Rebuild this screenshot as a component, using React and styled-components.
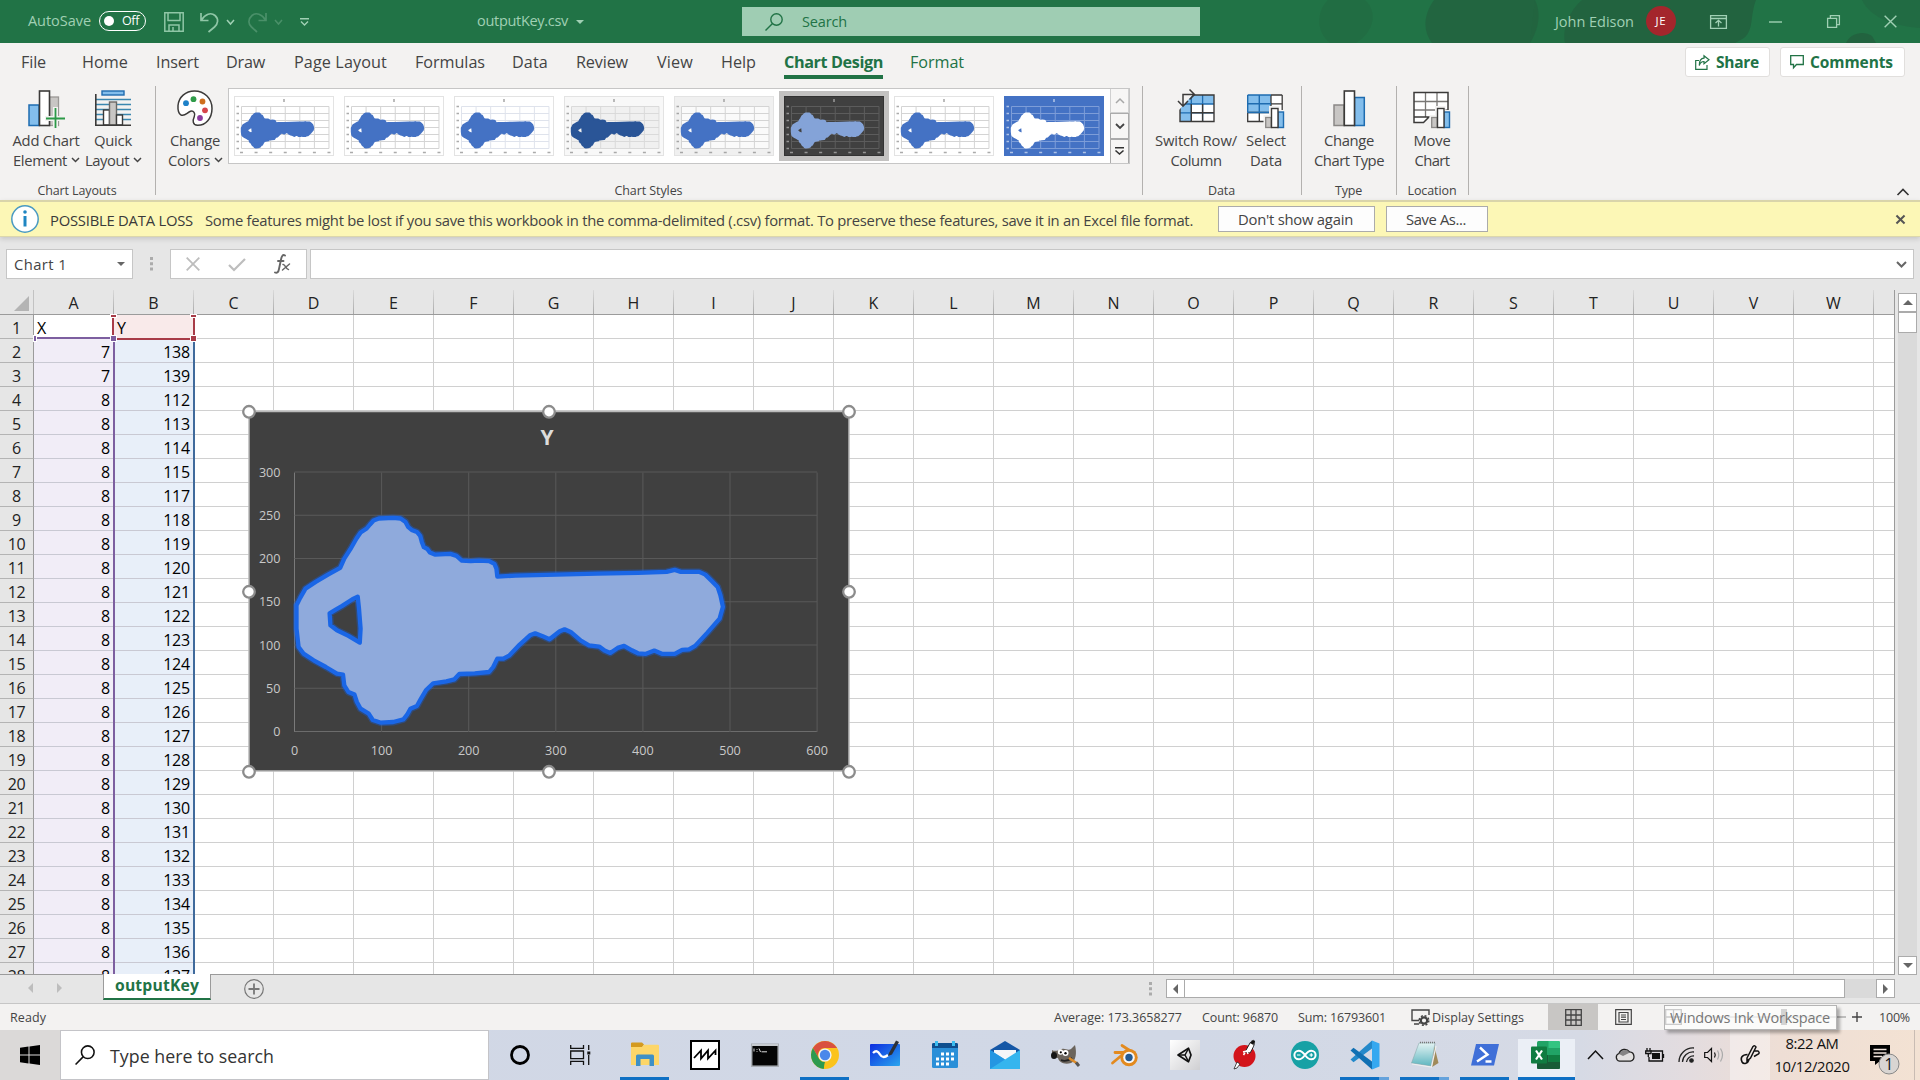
import React, { useLayoutEffect, useRef, useState } from "react";
import styled, { createGlobalStyle, css } from "styled-components";

const GlobalStyle = createGlobalStyle`
  * { box-sizing: border-box; }
  html, body { margin: 0; padding: 0; background: #e6e6e6; }
  body { font-family: "Open Sans", "Noto Sans", sans-serif; color: #444; overflow: hidden; }
  svg { display: block; flex: none; overflow: visible; }
`;

/* ---------- text ---------- */

const TextBox = styled.span`
  display: block;
  flex: none;
  white-space: nowrap;
  width: ${(p) => p.$w}px;
  margin-left: ${(p) => p.$ml || 0}px;
  margin-top: ${(p) => p.$mt || 0}px;
  font-size: ${(p) => p.$size}px;
  font-weight: ${(p) => p.$weight || 400};
  color: ${(p) => p.$color || "inherit"};
  line-height: ${(p) => p.$lh || 20}px;
`;

/* A label whose tracking is adjusted so that the word fills its column. */
function Label({ w, size, children, ...rest }) {
  const ref = useRef(null);
  const [tracking, setTracking] = useState(0);
  useLayoutEffect(() => {
    const range = document.createRange();
    range.selectNodeContents(ref.current);
    const natural = range.getBoundingClientRect().width;
    setTracking((w - natural) / String(children).length);
  }, []);
  return (
    <TextBox ref={ref} $w={w} $size={size} {...rest} style={{ letterSpacing: `${tracking}px` }}>
      {children}
    </TextBox>
  );
}

/* ---------- shell ---------- */

const Window = styled.div`
  width: 1920px;
  height: 1080px;
  display: flex;
  flex-direction: column;
  overflow: hidden;
  background: #e6e6e6;
`;

const Gap = styled.span`
  flex: none;
  width: ${(p) => p.$w}px;
`;

/* ---------- title bar ---------- */

const TitleBar = styled.header`
  position: relative;
  height: 43px;
  flex: none;
  display: flex;
  align-items: center;
  background: #217346;
  color: #a0d0b4;
  > * { position: relative; }
`;

const TitlePattern = styled.svg`
  && { position: absolute; right: 0; top: 0; }
  overflow: hidden;
`;

const Toggle = styled.div`
  width: 47px;
  height: 20px;
  margin: -2px 0 0 8px;
  border: 1.5px solid #fff;
  border-radius: 10px;
  display: flex;
  align-items: center;
  padding-left: 4px;
  color: #fff;
`;

const Knob = styled.i`
  width: 10px;
  height: 10px;
  border-radius: 50%;
  background: #fff;
`;

const SearchBox = styled.div`
  width: 458px;
  height: 29px;
  margin-left: 158px;
  background: #9fcdb3;
  color: #217346;
  display: flex;
  align-items: center;
  padding-left: 23px;
`;

const Avatar = styled.div`
  width: 30px;
  height: 30px;
  margin: -1px 0 0 12px;
  border-radius: 50%;
  background: #a4262c;
  color: #fff;
  display: flex;
  align-items: center;
  justify-content: center;
`;

/* ---------- tabs and ribbon ---------- */

const TabBar = styled.nav`
  height: 43px;
  flex: none;
  display: flex;
  align-items: flex-start;
  background: #f3f2f1;
`;

const Tab = styled.div`
  margin-left: ${(p) => p.$ml}px;
  height: 36px;
  padding-top: 9px;
  color: ${(p) => (p.$green ? "#217346" : "#444")};
  border-bottom: 4px solid ${(p) => (p.$active ? "#217346" : "transparent")};
`;

const ActionButton = styled.button`
  height: 30px;
  width: ${(p) => p.$w}px;
  margin: 4px 0 0 ${(p) => p.$ml}px;
  padding: 0 0 0 9px;
  border: 1px solid #e1dfdd;
  border-radius: 3px;
  background: #fff;
  color: #217346;
  font-family: inherit;
  display: flex;
  align-items: center;
  flex: none;
`;

const Ribbon = styled.section`
  height: 114px;
  flex: none;
  display: flex;
  background: #f3f2f1;
`;

const Group = styled.div`
  position: relative;
  width: ${(p) => p.$w}px;
  height: 114px;
  flex: none;
  display: flex;
  flex-direction: column;
  align-items: center;
  padding-right: 2px;
  &::after {
    content: "";
    position: absolute;
    right: 0;
    top: 0;
    width: 1px;
    height: 109px;
    background: #b3b1af;
  }
`;

const GroupBody = styled.div`
  height: 95px;
  flex: none;
  align-self: stretch;
  display: flex;
`;

const Command = styled.div`
  width: ${(p) => p.$w}px;
  margin-left: ${(p) => p.$ml}px;
  flex: none;
  display: flex;
  flex-direction: column;
  align-items: center;
  padding-top: 4px;
`;

const CommandIcon = styled.div`
  height: 40px;
  flex: none;
  display: flex;
  align-items: flex-start;
`;

const Line = styled.div`
  display: flex;
  align-items: center;
  gap: 5px;
  height: 20px;
`;

const Gallery = styled.div`
  width: 902px;
  height: 76px;
  flex: none;
  margin: 2px 0 0 3px;
  border: 1px solid #c6c6c6;
  background: #fff;
  display: flex;
  align-items: center;
  overflow: hidden;
`;

const Thumb = styled.div`
  width: 110px;
  height: 70px;
  flex: none;
  display: flex;
  align-items: center;
  justify-content: center;
  background: ${(p) => (p.$selected ? "#c3c2c1" : "transparent")};
`;

const GalleryScroll = styled.div`
  width: 19px;
  height: 76px;
  flex: none;
  margin-left: 1px;
  display: flex;
  flex-direction: column;
`;

const ScrollStep = styled.div`
  flex: 1;
  border: 1px solid ${(p) => (p.$off ? "#d0d0d0" : "#ababab")};
  background: #f7f6f5;
  display: flex;
  align-items: center;
  justify-content: center;
`;

/* ---------- message bar ---------- */

const MessageBar = styled.div`
  height: 37px;
  flex: none;
  display: flex;
  align-items: center;
  background: #fcf7b6;
  border-top: 2px solid #d9d4aa;
  border-bottom: 1px solid #dcd7ac;
  box-shadow: 0 2px 5px rgba(0, 0, 0, 0.14);
  z-index: 1;
  color: #444;
`;

const MessageButton = styled.button`
  width: ${(p) => p.$w}px;
  height: 26px;
  margin-left: ${(p) => p.$ml}px;
  padding: 0 2px 0 0;
  border: 1px solid #ababab;
  background: #fdfdfd;
  color: #444;
  font-family: inherit;
  display: flex;
  align-items: center;
  justify-content: center;
  flex: none;
`;

/* ---------- formula bar ---------- */

const FormulaBar = styled.div`
  height: 53px;
  flex: none;
  display: flex;
  align-items: flex-start;
  padding: 12px 0 0 6px;
`;

const Field = styled.div`
  height: 30px;
  width: ${(p) => p.$w}px;
  margin-left: ${(p) => p.$ml || 0}px;
  padding: 0 ${(p) => p.$pr || 0}px 0 ${(p) => p.$pl || 0}px;
  border: 1px solid #c6c6c6;
  background: #fff;
  display: flex;
  align-items: center;
  justify-content: space-between;
  flex: none;
`;

/* ---------- sheet ---------- */

const SheetArea = styled.main`
  height: 685px;
  flex: none;
  display: flex;
`;

const Grid = styled.div`
  position: relative;
  width: 1895px;
  height: 685px;
  flex: none;
  overflow: hidden;
  background: #fff;
  border-right: 1px solid #9b9b9b;
  border-bottom: 1px solid #9b9b9b;
`;

const HeaderRow = styled.div`
  display: flex;
  height: 25px;
  background: #e6e6e6;
  border-bottom: 1px solid #9b9b9b;
  color: #222;
`;

const Corner = styled.div`
  width: 34px;
  flex: none;
  display: flex;
  align-items: flex-end;
  justify-content: flex-end;
  padding: 0 4px 3px 0;
  border-right: 1px solid #c2c2c2;
`;

const ColumnHeader = styled.div`
  width: 80px;
  flex: none;
  text-align: center;
  font-size: 16px;
  line-height: 26px;
  border-right: 1px solid;
  border-image: linear-gradient(#dcdcdc, #a6a6a6) 1;
`;

const Row = styled.div`
  display: flex;
  height: 24px;
`;

const RowHeader = styled.div`
  width: 34px;
  flex: none;
  background: #e6e6e6;
  border-right: 1px solid #9b9b9b;
  border-bottom: 1px solid #b4b4b4;
  text-align: center;
  font-size: 16px;
  line-height: 26px;
  letter-spacing: -0.3px;
  color: #222;
`;

const tints = { a: "#f1edf7", b: "#e8eff9", head: "#f9eaea" };

const Cell = styled.div`
  width: ${(p) => p.$w || 80}px;
  flex: none;
  padding: 0 3px;
  border-right: 1px solid ${(p) => (p.$w ? "transparent" : "#d0d0d0")};
  border-bottom: 1px solid ${(p) => (p.$tint ? "#c9c9d3" : "#d0d0d0")};
  background: ${(p) => tints[p.$tint] || "#fff"};
  background-clip: padding-box;
  color: #000;
  font-size: 16px;
  line-height: 26px;
  letter-spacing: -0.2px;
  text-align: ${(p) => (p.$num ? "right" : "left")};
`;

const RangeFrame = styled.div`
  position: absolute;
  left: ${(p) => p.$x}px;
  top: ${(p) => p.$y}px;
  width: ${(p) => p.$w}px;
  height: ${(p) => p.$h}px;
  border: 0 solid ${(p) => p.$color};
  border-width: ${(p) => p.$edges};
`;

const RangeHandle = styled.i`
  position: absolute;
  left: ${(p) => p.$x}px;
  top: ${(p) => p.$y}px;
  width: ${(p) => p.$w || 6}px;
  height: ${(p) => p.$h || 6}px;
  background: ${(p) => p.$color};
  outline: 1px solid #fff;
`;

const ChartObject = styled.div`
  position: absolute;
  left: 249px;
  top: 121px;
  width: 600px;
  height: 360px;
`;

const VScroll = styled.div`
  width: 19px;
  margin: 3px 0 0 3px;
  display: flex;
  flex-direction: column;
  background: #dadada;
`;

const ScrollButton = styled.div`
  width: ${(p) => p.$w || 19}px;
  height: ${(p) => p.$h || 19}px;
  margin: ${(p) => p.$m || 0};
  flex: none;
  border: 1px solid #ababab;
  background: #fff;
  display: flex;
  align-items: center;
  justify-content: center;
`;

/* ---------- sheet tabs ---------- */

const SheetTabs = styled.div`
  height: 29px;
  flex: none;
  display: flex;
  align-items: flex-start;
  border-bottom: 1px solid #c6c6c6;
`;

const SheetTab = styled.div`
  width: 108px;
  height: 26px;
  margin: -1px 0 0 37px;
  padding: 1px 0 0 11px;
  background: #fff;
  border-right: 1px solid #9b9b9b;
  border-left: 1px solid #9b9b9b;
  border-bottom: 2px solid #217346;
  z-index: 1;
`;

const HScroll = styled.div`
  width: 729px;
  height: 19px;
  margin: 4px 0 0 14px;
  display: flex;
  justify-content: space-between;
  background: #dadada;
`;

/* ---------- status bar ---------- */

const StatusBar = styled.footer`
  position: relative;
  height: 26px;
  flex: none;
  display: flex;
  align-items: center;
  background: #f3f2f1;
  color: #444;
`;

const ViewButton = styled.div`
  width: 50px;
  height: 26px;
  flex: none;
  display: flex;
  align-items: center;
  justify-content: center;
  background: ${(p) => (p.$on ? "#c8c6c4" : "transparent")};
`;

const Tooltip = styled.div`
  position: absolute;
  left: 1664px;
  top: 1px;
  width: 173px;
  height: 25px;
  padding: 1px 0 0 5px;
  border: 1px solid #b4b4b4;
  background: rgba(253, 253, 253, 0.72);
  box-shadow: 3px 3px 3px rgba(0, 0, 0, 0.3);
  color: #777;
`;

/* ---------- taskbar ---------- */

const Taskbar = styled.div`
  height: 50px;
  flex: none;
  display: flex;
  background: linear-gradient(90deg, #d1d7e5 0, #d1d8e6 1200px, #d6dae5 1580px, #e3dcdf 1690px, #eeded5 1780px, #f3e2d3 1920px);
`;

const StartButton = styled.div`
  width: 60px;
  height: 50px;
  background: #dbd9d8;
  display: flex;
  align-items: center;
  justify-content: center;
  flex: none;
`;

const TaskSearch = styled.div`
  width: 429px;
  height: 50px;
  flex: none;
  border: 1px solid #c4c4c8;
  background: #fff;
  color: #333;
  display: flex;
  align-items: center;
  padding-left: 14px;
`;

const TaskItem = styled.div`
  position: relative;
  width: 60px;
  margin-left: ${(p) => p.$ml || 0}px;
  height: 50px;
  flex: none;
  display: flex;
  align-items: center;
  justify-content: center;
  ${(p) =>
    p.$running &&
    css`
      &::after {
        content: "";
        position: absolute;
        left: ${p.$focus ? 3 : 5}px;
        bottom: 0;
        width: ${p.$focus ? 57 : 49}px;
        height: 3px;
        background: ${p.$stacked ? "linear-gradient(90deg, #0f70c4 39px, #66a3dc 39px)" : "#0f70c4"};
      }
    `}
  ${(p) => p.$focus && css`background: linear-gradient(#ebeff6, #ebeff6) 3px 9px / 57px 41px no-repeat;`}
`;

const Tray = styled.div`
  flex: 1;
  display: flex;
  align-items: center;
`;

const TrayItem = styled.div`
  width: ${(p) => p.$w}px;
  height: 50px;
  flex: none;
  display: flex;
  align-items: center;
  justify-content: center;
  background: ${(p) => (p.$hover ? "rgba(255,255,255,0.4)" : "transparent")};
`;

const Clock = styled.div`
  width: 84px;
  display: flex;
  flex-direction: column;
  align-items: center;
  color: #111;
`;

/* ---------- small drawings ---------- */

const Chevron = ({ w = 8, h = 4, up, color = "#444", sw = 1.5 }) => (
  <svg width={w} height={h} viewBox={`0 0 ${w} ${h}`}>
    <path d={up ? `M0 ${h}L${w / 2} 0L${w} ${h}` : `M0 0L${w / 2} ${h}L${w} 0`} fill="none" stroke={color} strokeWidth={sw} />
  </svg>
);

const arrows = {
  up: "M0 6L6 0L12 6Z",
  down: "M0 0L12 0L6 6Z",
  left: "M6 0V12L0 6Z",
  right: "M0 0V12L6 6Z",
};
const Arrow = ({ dir, size = 10, color = "#666" }) => {
  const flat = dir === "up" || dir === "down";
  return (
    <svg width={flat ? size : size / 2} height={flat ? size / 2 : size} viewBox={flat ? "0 0 12 6" : "0 0 6 12"}>
      <path d={arrows[dir]} fill={color} />
    </svg>
  );
};

const Dots = ({ h, top }) => (
  <svg width="3" height={h} viewBox={`0 ${-top} 3 ${h}`}>
    <path d="M0 0h3v3H0zM0 5.300h3v3H0zM0 10.600h3v3H0z" fill="#ababab" />
  </svg>
);

const Magnifier = ({ size = 18, color, sw = 1.4 }) => (
  <svg width={size} height={size} viewBox="0 0 18 18" fill="none" stroke={color} strokeWidth={sw}>
    <circle cx="11.5" cy="6.5" r="5.7" />
    <path d="M7.5 10.5L0.5 17.5" />
  </svg>
);

const Cross = ({ size, color, sw = 1.4 }) => (
  <svg width={size} height={size} viewBox="0 0 10 10">
    <path d="M0.5 0.5L9.5 9.5M9.5 0.5L0.5 9.5" stroke={color} strokeWidth={(sw * 10) / size} />
  </svg>
);

/* ---------- key outline, traced at 2.135 x 2.593 units per data step ---------- */

const TRACE = { left: 158, right: 1439, top: 232, bottom: 1010 };
const BODY =
  "335,400 343,388 352,376 365,370 400,368 418,370 430,380 437,396 445,404 458,410 466,422 470,440 475,456 484,462 490,472 502,478 540,476 555,482 568,496 590,498 610,496 635,498 648,506 653,520 655,544 700,541 800,538 900,535 1000,533 1070,530 1090,524 1105,530 1150,530 1165,538 1180,556 1195,575 1202,600 1208,635 1200,670 1170,712 1140,752 1125,762 1108,764 1090,776 1060,776 1040,766 1018,776 1000,774 985,765 966,752 950,758 932,773 918,766 905,754 880,750 860,736 835,710 820,702 808,708 783,732 765,722 748,714 735,720 710,748 685,780 670,790 655,790 645,815 635,830 600,834 562,836 550,852 530,858 498,864 480,885 468,910 458,932 442,940 434,958 425,972 400,980 370,982 350,974 340,955 320,940 311,920 305,898 290,890 280,870 277,838 262,835 235,815 205,795 180,775 168,755 163,700 163,630 172,608 185,580 210,560 240,538 270,518 280,490 295,462 310,430 320,412";
const HOLE = "313,604 300,612 275,632 258,644 244,654 246,690 262,705 290,722 318,742 320,700 316,640";

function keyPath(x, y, w, h) {
  const loop = (text) =>
    text
      .split(" ")
      .map((pair, i) => {
        const [u, v] = pair.split(",").map(Number);
        const px = x + ((u - TRACE.left) / (TRACE.right - TRACE.left)) * w;
        const py = y + ((v - TRACE.top) / (TRACE.bottom - TRACE.top)) * h;
        return `${i ? "L" : "M"}${px.toFixed(1)} ${py.toFixed(1)}`;
      })
      .join("") + "Z";
  return loop(BODY) + loop(HOLE);
}

const CHART_KEY = keyPath(45.5, 61.5, 522.6, 259.5);
const THUMB_KEY = keyPath(7.5, 10, 87.5, 43);

function ChartThumb({ bg = "#fff", plot, grid = "#d4d4d4", fill = "#4472c4", ink = "#888", edge = "#e3e3e3" }) {
  const xs = [0, 1, 2, 3, 4, 5, 6];
  return (
    <svg width="100" height="60" viewBox="0 0 100 60">
      <rect x="0.5" y="0.5" width="99" height="59" fill={bg} stroke={edge} />
      {plot && <rect x="7.5" y="10.5" width="87.5" height="42" fill={plot} />}
      {xs.map((i) => (
        <path key={i} d={`M${7.5 + i * 14.58} 10.5v42M7.5 ${10.5 + i * 7}h87.5`} stroke={grid} strokeWidth="1" />
      ))}
      {xs.map((i) => (
        <path key={i} d={`M${6 + i * 14.58} 56.5h3M2.5 ${10.5 + i * 7}h2.5`} stroke={ink} strokeWidth="1.4" opacity="0.7" />
      ))}
      <path d="M50 3v3" stroke={ink} strokeWidth="1.4" opacity="0.8" />
      <path d={THUMB_KEY} fill={fill} fillRule="evenodd" stroke={fill} strokeWidth="2" strokeLinejoin="round" />
    </svg>
  );
}

const thumbs = [
  {},
  {},
  { grid: "#dfe3ec" },
  { bg: "#f8f8f8", plot: "#f0f0f0", grid: "#dadada", fill: "#2a5597" },
  { bg: "#f0f0f0", plot: "#fafafa" },
  { bg: "#404040", edge: "#333", grid: "#5c5c5c", fill: "#84a3d8", ink: "#bbb", selected: true },
  {},
  { bg: "#4472c4", edge: "#4472c4", grid: "#7d9dd8", fill: "#fff", ink: "#dde6f5" },
];

function Chart() {
  const handles = [0, 300, 600].flatMap((x) => [0, 180, 360].map((y) => [x, y])).filter(([x, y]) => x !== 300 || y !== 180);
  return (
    <svg width="600" height="360" viewBox="0 0 600 360" fontFamily='"Open Sans", sans-serif' fill="#c9c9c9">
      <rect x="0" y="0.5" width="600" height="359.5" fill="#404040" stroke="#b9b9b9" strokeWidth="1.5" />
      {[0, 1, 2, 3, 4, 5, 6].map((i) => (
        <g key={i}>
          <path d={`M${45.5 + i * 87.1} 61.5v259.5`} stroke={i === 0 ? "#7a7a7a" : "#595959"} />
          <path d={`M45.5 ${320.5 - i * 43.25}h522.6`} stroke={i === 0 ? "#6c6c6c" : "#595959"} />
          <text x={45.5 + i * 87.1} y="344" fontSize="12.600" textAnchor="middle">{i * 100}</text>
          <text x="31.500" y={325 - i * 43.25} fontSize="12.600" textAnchor="end">{i * 50}</text>
        </g>
      ))}
      <text x="298" y="34" fontSize="21" fontWeight="700" textAnchor="middle" fill="#dcdcdc">Y</text>
      <path d={CHART_KEY} fill="none" stroke="#1560e8" strokeWidth="7" strokeLinejoin="round" opacity="0.35" />
      <path d={CHART_KEY} fill="#8faadc" fillRule="evenodd" stroke="#1a66e6" strokeWidth="4.300" strokeLinejoin="round" />
      {handles.map(([x, y]) => (
        <circle key={`${x}-${y}`} cx={x} cy={y + 0.8} r="5.800" fill="#fff" stroke="#8c8c8c" strokeWidth="2.300" />
      ))}
    </svg>
  );
}

/* ---------- ribbon icons ---------- */

const AddElementIcon = () => (
  <svg width="37" height="38" viewBox="0 0 37 38">
    <rect x="1" y="15" width="10" height="20.5" fill="#83beec" stroke="#1e6cb0" strokeWidth="1.5" />
    <rect x="21.5" y="7" width="9" height="28.5" fill="#c8c6c4" stroke="#9a9896" strokeWidth="1.3" />
    <rect x="11.5" y="1" width="10" height="34.5" fill="#fff" stroke="#3b3a39" strokeWidth="1.6" />
    <path d="M27.5 17V39M17 28.5H38" stroke="#f3f2f1" strokeWidth="5" />
    <path d="M27.5 18V38M18 28.5H37" stroke="#2c9a48" strokeWidth="1.8" />
  </svg>
);

const QuickLayoutIcon = () => (
  <svg width="36" height="38" viewBox="0 0 36 38">
    <rect x="7" y="1" width="22" height="4" fill="#83beec" stroke="#1e6cb0" strokeWidth="1.4" />
    <path d="M1 9.5H36M1 14.5H36M1 19.5H36M1 24.5H36M1 29.5H36" stroke="#3a87b0" strokeWidth="1.5" />
    <rect x="8.5" y="20" width="6" height="15" fill="#fff" stroke="#3b3a39" strokeWidth="1.4" />
    <rect x="14.5" y="12" width="7" height="23" fill="#c8c6c4" stroke="#6a6866" strokeWidth="1.4" />
    <rect x="21.5" y="25" width="6" height="10" fill="#fff" stroke="#3b3a39" strokeWidth="1.4" />
    <path d="M0.8 4V35.3H36" fill="none" stroke="#3b3a39" strokeWidth="1.6" />
  </svg>
);

const PaletteIcon = () => (
  <svg width="36" height="38" viewBox="0 0 36 38">
    <path d="M17.5 1C27.5 1 35 8.5 35 18.5C35 28.5 28.500 35.500 20.500 35.300C15.500 35.100 15.500 30.500 17.300 26.500C18.700 23.300 16.500 20.300 13.500 21.300C10 22.500 7.500 27 3.800 24.800C1.200 23.200 0.800 19 1 15.500C1.700 7 8.500 1 17.500 1Z" fill="#fff" stroke="#3b3a39" strokeWidth="1.5" />
    <circle cx="9" cy="13.200" r="2.900" fill="#1e81c8" />
    <circle cx="16.500" cy="9.200" r="2.900" fill="#2f9b49" />
    <circle cx="25.500" cy="11.500" r="2.900" fill="#cf6f1d" />
    <circle cx="28" cy="20.300" r="2.900" fill="#d6454b" />
    <circle cx="23" cy="28" r="2.900" fill="#8b3a9e" />
  </svg>
);

const SwitchIcon = () => (
  <svg width="38" height="38" viewBox="0 0 38 38">
    <rect x="3" y="5" width="34" height="26.500" fill="#fff" />
    <path d="M3 5H37V14H14V31.500H3Z" fill="#83beec" />
    <path d="M14.300 5V31.500M25.600 5V31.500M3 14H37M3 22.800H37" fill="none" stroke="#1e6cb0" strokeWidth="1.300" />
    <path d="M3 5H37V31.500H3ZM14.300 14V31.500M25.600 14V31.500M14.300 22.800H37" fill="none" stroke="#3b3a39" strokeWidth="1.400" />
    <path d="M-1 -1H21L2 20H-1Z" fill="#f3f2f1" />
    <path d="M6 15.500V4.500H16.500M1 11L6 16.200L11 11M12.500 -0.500L17.500 4.500L12.500 9.500" fill="none" stroke="#3b3a39" strokeWidth="1.500" />
  </svg>
);

const MiniBars = ({ x, y }) => (
  <g transform={`translate(${x} ${y})`}>
    <path d="M-1.500 7H4V-2H14.500V2H20.500V21H-1.500Z" fill="#f3f2f1" />
    <rect x="0.700" y="9.500" width="5.500" height="10" fill="#c8c6c4" stroke="#8a8886" strokeWidth="1.300" />
    <rect x="13" y="4" width="5.500" height="15.500" fill="#83beec" stroke="#1e6cb0" strokeWidth="1.400" />
    <rect x="6.500" y="0.500" width="6.500" height="19" fill="#fff" stroke="#3b3a39" strokeWidth="1.400" />
  </g>
);

const SelectDataIcon = () => (
  <svg width="38" height="38" viewBox="0 0 38 38">
    <rect x="0.700" y="5" width="34.500" height="26.500" fill="#fff" />
    <path d="M0.700 5H24V22.500H0.700Z" fill="#83beec" />
    <path d="M35.200 5V31.500H0.700V22.500M24 5H35.200M24 13.800H35.200M12.300 22.500V31.500M24 5V31.500M0.700 22.500H35" fill="none" stroke="#3b3a39" strokeWidth="1.300" />
    <path d="M0.700 5H24M0.700 5V22.500M12.300 5V22.500M0.700 13.800H24M0.700 22.500H24" fill="none" stroke="#1e6cb0" strokeWidth="1.400" />
    <MiniBars x={18} y={18} />
  </svg>
);

const ChartTypeIcon = () => (
  <svg width="32" height="38" viewBox="0 0 32 38">
    <rect x="1" y="15" width="10" height="20.500" fill="#c8c6c4" stroke="#8a8886" strokeWidth="1.500" />
    <rect x="21.500" y="7.500" width="9.800" height="28" fill="#83beec" stroke="#1e6cb0" strokeWidth="1.500" />
    <rect x="11.300" y="1" width="10.200" height="34.500" fill="#fff" stroke="#3b3a39" strokeWidth="1.600" />
  </svg>
);

const MoveChartIcon = () => (
  <svg width="38" height="38" viewBox="0 0 38 38">
    <path d="M1 2.500H35V28H16L11 32.500H1Z" fill="#fff" />
    <path d="M12.500 2.500V27M24 2.500V27M1 11.500H35M1 20H35" fill="none" stroke="#797775" strokeWidth="1.300" />
    <path d="M35 20V2.500H1V32.500H10.500L16 27H1" fill="none" stroke="#3b3a39" strokeWidth="1.500" />
    <MiniBars x={18} y={18} />
  </svg>
);

const ShareIcon = () => (
  <svg width="15" height="15" viewBox="0 0 15 15" fill="none" stroke="#217346" strokeWidth="1.200">
    <path d="M4 5.500H0.700V14.300H12V10M9 0.800L14 4.800L9 8.800V6.500C6.500 6.500 5 8 4.300 10.500C4 6 6 3.200 9 3.200Z" />
  </svg>
);

const CommentIcon = () => (
  <svg width="14" height="14" viewBox="0 0 14 14" fill="none" stroke="#217346" strokeWidth="1.300">
    <path d="M0.700 0.700H13.300V9.500H6.500L3.500 12.800V9.500H0.700Z" />
  </svg>
);

/* ---------- taskbar icons ---------- */

const Ic = ({ children, s = 30 }) => (
  <svg width={s} height={s} viewBox={`0 0 ${s} ${s}`}>{children}</svg>
);

const taskIcons = {
  cortana: <Ic s={20}><circle cx="10" cy="10" r="8.500" fill="none" stroke="#000" strokeWidth="2.800" /></Ic>,
  taskView: (
    <Ic s={20}>
      <path d="M0.700 0V3.300H13.500V0M0.700 20V16.300H13.500V20M0.700 6H13.500V13.700H0.700ZM18.700 0V5M18.700 10V20" fill="none" stroke="#111" strokeWidth="1.300" />
      <rect x="17.300" y="6.500" width="3" height="3" fill="#111" />
    </Ic>
  ),
  explorer: (
    <Ic>
      <path d="M1 3.500a1 1 0 0 1 1-1h10l2 2-2 3H1z" fill="#d49a1f" />
      <path d="M1 7h11l2-2.200h14a1 1 0 0 1 1 1V25H1z" fill="#fdd669" />
      <path d="M6 26V16a1.500 1.500 0 0 1 1.500-1.500h15A1.500 1.500 0 0 1 24 16v10h-4.500v-7h-9v7z" fill="#3f90c6" />
    </Ic>
  ),
  matrix: (
    <Ic>
      <rect x="1" y="1" width="28" height="28" fill="#fff" stroke="#000" strokeWidth="2" />
      <path d="M4 18L11 10.500V18.500L18 10.500V18.500L25.500 10.500V15" fill="none" stroke="#000" strokeWidth="1.800" />
    </Ic>
  ),
  cmd: (
    <Ic s={28}>
      <rect x="0.700" y="3.200" width="26.500" height="22" fill="#050505" stroke="#a8adb3" strokeWidth="1.500" />
      <path d="M1 4H27" stroke="#c7cbd0" strokeWidth="2" />
      <path d="M3 7.500v3M6 8v.8M6 10.200v.8M8 7.500l1.500 3.500M10.500 10.800H16" stroke="#ddd" strokeWidth="1" />
    </Ic>
  ),
  chrome: (
    <Ic s={28}>
      <circle cx="14" cy="14" r="14" fill="#fbc31c" />
      <path d="M1.900 7A14 14 0 0 1 26.100 7H14A7 7 0 0 0 7.900 17.500Z" fill="#d9503f" />
      <path d="M1.900 7L7.900 17.500A7 7 0 0 0 14 21L12.800 28A14 14 0 0 1 1.900 7Z" fill="#2d9a50" />
      <path d="M14 21L20 17.500L13.500 28L12.800 28Z" fill="#fbc31c" />
      <circle cx="14" cy="14" r="6.600" fill="#f2f2f2" />
      <circle cx="14" cy="14" r="5.200" fill="#4b87ea" />
    </Ic>
  ),
  whiteboard: (
    <Ic>
      <defs><linearGradient id="wb" x1="0" y1="0" x2="1" y2="1"><stop offset="0" stopColor="#0b2be0" /><stop offset="1" stopColor="#2aa6ee" /></linearGradient></defs>
      <rect x="0" y="4" width="30" height="22" rx="1" fill="url(#wb)" />
      <path d="M3 13C6 10 8 11 10 14.500C12 18 15 17.500 18 15" fill="none" stroke="#fff" strokeWidth="2.400" />
      <path d="M19 13L26 0.500L29 2L22 14.500L18 16Z" fill="#2d3138" />
    </Ic>
  ),
  calendar: (
    <Ic s={28}>
      <rect x="1" y="2" width="26" height="25" rx="1.500" fill="#2a8fd8" />
      <path d="M1 7V3.500A1.500 1.500 0 0 1 2.500 2h23A1.500 1.500 0 0 1 27 3.500V7z" fill="#0f4f8e" />
      <path d="M5.500 0v5M22.500 0v5" stroke="#3cbdf0" strokeWidth="3" />
      <path d="M10 13h13M5 18h18M5 23h13" stroke="#fff" strokeWidth="3" strokeDasharray="3 2" />
    </Ic>
  ),
  mail: (
    <Ic>
      <path d="M0 10L15 1L30 10V16H0Z" fill="#1557a6" />
      <path d="M4 10H26V20H4Z" fill="#f5f6f8" />
      <path d="M0 10L15 19.500L30 10V29H0Z" fill="#35b5ee" />
      <path d="M0 29L15 19.500L0 10Z" fill="#2496e2" />
    </Ic>
  ),
  gimp: (
    <Ic s={28}>
      <path d="M1 9C4 11 8 9 11 8C14 7 17 10 20 8L24 4C26 12 25 20 20 22C13 24 8 21 7 17L1 16Z" fill="#6b645c" />
      <ellipse cx="3" cy="14.500" rx="3" ry="3.500" fill="#151515" />
      <circle cx="9.500" cy="11" r="2.700" fill="#fff" /><circle cx="9.800" cy="11.300" r="1.100" />
      <circle cx="14.500" cy="12" r="3" fill="#fff" /><circle cx="14.500" cy="12.300" r="1.200" />
      <path d="M10 19C14 21 17 20 21 17" stroke="#222" strokeWidth="1.600" fill="none" />
      <path d="M18 17L27 23" stroke="#dc8b28" strokeWidth="2.400" /><path d="M25 21.500L28 25" stroke="#555" strokeWidth="3" />
    </Ic>
  ),
  blender: (
    <Ic s={28}>
      <circle cx="18" cy="16.500" r="8.700" fill="#e38a1f" />
      <path d="M1.500 22L14 11.500M4 11.500H16M11 4.500L21 11" stroke="#e38a1f" strokeWidth="2.800" strokeLinecap="round" fill="none" />
      <circle cx="18" cy="16.500" r="5.800" fill="#f6f8fb" />
      <circle cx="18" cy="16.500" r="3.700" fill="#245a93" />
    </Ic>
  ),
  unity: (
    <Ic>
      <defs><linearGradient id="un" x1="0" y1="0" x2="1" y2="1"><stop offset="0" stopColor="#fff" /><stop offset="1" stopColor="#cfcfd2" /></linearGradient></defs>
      <rect width="30" height="30" fill="url(#un)" />
      <path d="M8 15L18.500 8.200L21 15L18.500 21.800Z" fill="none" stroke="#111" strokeWidth="1.700" strokeLinejoin="round" />
      <path d="M15 15H8.500M15 15L18.500 8.500M15 15L18.500 21.500" stroke="#111" strokeWidth="1.500" />
    </Ic>
  ),
  rocket: (
    <Ic>
      <circle cx="14.500" cy="16" r="11" fill="#d3141b" />
      <path d="M15 12L20 3C22 0 24 0 24.500 1C25 4 23 8 20 13Z" fill="#fff" stroke="#222" strokeWidth="1" />
      <path d="M20 3C22 0 24 0 24.500 1L23.500 5Z" fill="#111" />
      <path d="M13 12L17 11L18 14M13.500 15L15 12.500" stroke="#fff" strokeWidth="1.500" fill="none" />
      <path d="M4 29L7 22L10 24L7 28Z" fill="#fff" stroke="#222" strokeWidth="0.800" />
    </Ic>
  ),
  arduino: (
    <Ic s={28}>
      <circle cx="14" cy="14" r="14" fill="#17a1a5" />
      <path d="M14 14C11.500 10.500 9.500 9.700 7.700 9.700A4.300 4.300 0 0 0 7.700 18.300C9.500 18.300 11.500 17.500 14 14C16.500 10.500 18.500 9.700 20.300 9.700A4.300 4.300 0 0 1 20.300 18.300C18.500 18.300 16.500 17.500 14 14Z" fill="none" stroke="#fff" strokeWidth="2" />
      <path d="M6 14h3.500M18.500 14h3.500M20.250 12.200v3.500" stroke="#fff" strokeWidth="1.200" />
    </Ic>
  ),
  vscode: (
    <Ic>
      <path d="M0.500 19.500L22 0.500V8.500L3.500 22.300Z" fill="#2489ca" />
      <path d="M0.500 10.500L22 29.500V21.500L3.500 7.700Z" fill="#1070b3" />
      <path d="M22 0.500L29.500 3.500V26.500L22 29.500Z" fill="#35a8f0" />
    </Ic>
  ),
  notepad: (
    <Ic>
      <defs><linearGradient id="np" x1="0" y1="0" x2="0" y2="1"><stop offset="0" stopColor="#e3f3f3" /><stop offset="1" stopColor="#5fb6c0" /></linearGradient></defs>
      <path d="M24 5L28.500 23L22 27Z" fill="#a08a5a" />
      <path d="M9 3H25L21 26L1.500 23Z" fill="url(#np)" stroke="#8aa9ad" strokeWidth="0.600" />
      <path d="M10 2.500H25" stroke="#777" strokeWidth="1.500" strokeDasharray="1 1" />
      <path d="M2 24L21.500 27L26 6" fill="none" stroke="#eee" strokeWidth="1.200" />
    </Ic>
  ),
  powershell: (
    <Ic s={28}>
      <path d="M5 3H28L23 24.500H0Z" fill="#3f6fd8" />
      <path d="M9 6.500L16.500 13.500L6 20.500M14.500 20.500H20.500" stroke="#fff" strokeWidth="2.400" fill="none" />
    </Ic>
  ),
  excel: (
    <Ic>
      <rect x="7" y="1" width="23" height="28" rx="1.500" fill="#21a366" />
      <path d="M18.500 1H28.500A1.500 1.500 0 0 1 30 2.500V8H18.500Z" fill="#33c481" />
      <path d="M7 15H18.500V22H7Z" fill="#185c37" /><path d="M18.500 15H30V22H18.500Z" fill="#107c41" />
      <path d="M7 22H30V27.500A1.500 1.500 0 0 1 28.500 29H8.500A1.500 1.500 0 0 1 7 27.500Z" fill="#185c37" />
      <rect x="1" y="6.500" width="16" height="17" rx="1" fill="#107c41" />
      <path d="M6 10.500L12 19.500M12 10.500L6 19.500" stroke="#fff" strokeWidth="2.200" />
    </Ic>
  ),
};

const taskItems = [
  { icon: "cortana", ml: 1 },
  { icon: "taskView" },
  { icon: "explorer", running: true, ml: 5 },
  { icon: "matrix" },
  { icon: "cmd" },
  { icon: "chrome", running: true },
  { icon: "whiteboard" },
  { icon: "calendar" },
  { icon: "mail" },
  { icon: "gimp" },
  { icon: "blender" },
  { icon: "unity" },
  { icon: "rocket" },
  { icon: "arduino" },
  { icon: "vscode", running: true, stacked: true },
  { icon: "notepad", running: true, stacked: true },
  { icon: "powershell", running: true },
  { icon: "excel", running: true, focus: true },
];

/* ---------- data ---------- */

const tabs = [
  { name: "File", x: 21, w: 25 },
  { name: "Home", x: 82, w: 46 },
  { name: "Insert", x: 156, w: 43 },
  { name: "Draw", x: 226, w: 39 },
  { name: "Page Layout", x: 294, w: 93 },
  { name: "Formulas", x: 415, w: 70 },
  { name: "Data", x: 512, w: 36 },
  { name: "Review", x: 576, w: 52 },
  { name: "View", x: 657, w: 36 },
  { name: "Help", x: 721, w: 35 },
  { name: "Chart Design", x: 784, w: 99, green: true, active: true },
  { name: "Format", x: 910, w: 54, green: true },
];

const columns = "ABCDEFGHIJKLMNOPQRSTUVW".split("");
const xValues = ["X", 7, 7, ...Array(25).fill(8)];
const yValues = ["Y", 138, 139, 112, 113, 114, 115, 117, 118, 119, 120, 121, 122, 123, 124, 125, 126, 127, 128, 129, 130, 131, 132, 133, 134, 135, 136, 137];

function CommandButton({ w, ml, icon, lines, menu }) {
  return (
    <Command $w={w} $ml={ml}>
      <CommandIcon>{icon}</CommandIcon>
      {lines.map(([text, width], i) => (
        <Line key={text}>
          <Label w={width} size={14.8}>{text}</Label>
          {menu && i === 1 && <Chevron w={7} h={3.5} />}
        </Line>
      ))}
    </Command>
  );
}

export default function App() {
  return (
    <Window>
      <GlobalStyle />

      <TitleBar>
        <TitlePattern width="640" height="43" viewBox="0 0 640 43">
          <g fill="#22633f">
            <path d="M48 0H85C98 12 94 32 76 43H50C36 32 36 12 48 0Z" opacity="0.400" />
            <path d="M154 0H255C262 14 258 30 250 43H152C142 30 144 14 154 0Z" opacity="0.850" />
            <path d="M302 0H476C470 15 474 30 464 38L455 43H285C282 28 290 10 302 0Z" />
            <path d="M255 0H302V43H250Z" opacity="0.350" />
            <path d="M566 43C570 33 584 30 592 36L596 43Z" />
            <path d="M582 0H640V28C615 26 590 18 582 0Z" opacity="0.500" />
          </g>
        </TitlePattern>
        <Label w={63} size={14.5} $ml={28} $mt={-1}>AutoSave</Label>
        <Toggle>
          <Knob />
          <Label w={17} size={12.5} $ml={8} $lh={17}>Off</Label>
        </Toggle>
        <Gap $w={18} />
        <svg width="20" height="20" viewBox="0 0 20 20" fill="none" stroke="#8fc6a6" strokeWidth="1.500">
          <path d="M0.800 0.800H19.200V19.200H0.800ZM4 0.800V8.500H16V0.800M5 19.200V13H15V19.200M9 15V19" />
        </svg>
        <Gap $w={16} />
        <svg width="19" height="20" viewBox="0 0 19 20" fill="none" stroke="#8fc6a6" strokeWidth="1.700">
          <path d="M1 1V8.500H8.500M1.500 8C5 2 11 0 15 3.500C19 7 18 12 14.500 15L8.500 20" />
        </svg>
        <Gap $w={8} />
        <Chevron w={7} h={4} color="#a0d0b4" />
        <Gap $w={14} />
        <svg width="19" height="20" viewBox="0 0 19 20" fill="none" stroke="#4a9069" strokeWidth="1.700">
          <path d="M18 1V8.500H10.500M17.500 8C14 2 8 0 4 3.500C0 7 0 12 3.500 15L9 20" />
        </svg>
        <Gap $w={8} />
        <Chevron w={7} h={4} color="#4a9069" />
        <Gap $w={18} />
        <svg width="9" height="8" viewBox="0 0 9 8" fill="none" stroke="#a0d0b4" strokeWidth="1.400">
          <path d="M0 0.700H9M1 3.500L4.500 7L8 3.500" />
        </svg>
        <Label w={91} size={14.5} $ml={168} $mt={-2}>outputKey.csv</Label>
        <Gap $w={8} />
        <Arrow dir="down" size={8} color="#a0d0b4" />
        <SearchBox>
          <Magnifier color="#217346" />
          <Label w={45} size={14.5} $ml={19}>Search</Label>
        </SearchBox>
        <Label w={79} size={14.5} $ml={355}>John Edison</Label>
        <Avatar><Label w={11} size={11.5}>JE</Label></Avatar>
        <Gap $w={34} />
        <svg width="17" height="14" viewBox="0 0 17 14" fill="none" stroke="#a0d0b4" strokeWidth="1.300">
          <path d="M0.600 0.600H16.400V13.400H0.600ZM0.600 3.500H16.400M8.500 11.500V5.500M5.500 8L8.500 5.300L11.500 8" />
        </svg>
        <Gap $w={42} />
        <svg width="13" height="2" viewBox="0 0 13 2"><path d="M0 1H13" stroke="#a0d0b4" strokeWidth="1.400" /></svg>
        <Gap $w={45} />
        <svg width="13" height="13" viewBox="0 0 13 13" fill="none" stroke="#a0d0b4" strokeWidth="1.300">
          <path d="M0.600 3.400H9.600V12.400H0.600ZM3.400 3V0.600H12.400V9.600H10" />
        </svg>
        <Gap $w={44} />
        <Cross size={13} color="#a0d0b4" />
      </TitleBar>

      <TabBar>
        {tabs.map((t, i) => (
          <Tab key={t.name} $ml={i ? t.x - tabs[i - 1].x - tabs[i - 1].w : t.x} $green={t.green} $active={t.active}>
            <Label w={t.w} size={16.2} $weight={t.active ? 700 : 400}>{t.name}</Label>
          </Tab>
        ))}
        <ActionButton $w={85} $ml={721}>
          <ShareIcon />
          <Label w={43} size={15.5} $weight={700} $ml={6}>Share</Label>
        </ActionButton>
        <ActionButton $w={125} $ml={10}>
          <CommentIcon />
          <Label w={83} size={15.5} $weight={700} $ml={6}>Comments</Label>
        </ActionButton>
      </TabBar>

      <Ribbon>
        <Group $w={156}>
          <GroupBody>
            <CommandButton w={70} ml={11} icon={<AddElementIcon />} lines={[["Add Chart", 67], ["Element", 54]]} menu />
            <CommandButton w={64} ml={0} icon={<QuickLayoutIcon />} lines={[["Quick", 38], ["Layout", 44]]} menu />
          </GroupBody>
          <Label w={79} size={12.5}>Chart Layouts</Label>
        </Group>
        <Group $w={987}>
          <GroupBody>
            <CommandButton w={60} ml={9} icon={<PaletteIcon />} lines={[["Change", 50], ["Colors", 42]]} menu />
            <Gallery>
              {thumbs.map(({ selected, ...look }, i) => (
                <Thumb key={i} $selected={selected}><ChartThumb {...look} /></Thumb>
              ))}
              <GalleryScroll>
                <ScrollStep $off><Chevron w={8} h={4} up color="#a8a8a8" /></ScrollStep>
                <ScrollStep><Chevron w={8} h={4} sw={1.800} /></ScrollStep>
                <ScrollStep>
                  <svg width="9" height="8" viewBox="0 0 9 8" fill="none" stroke="#333" strokeWidth="1.600">
                    <path d="M0 0.800H9M0.500 3.500L4.500 7L8.500 3.500" />
                  </svg>
                </ScrollStep>
              </GalleryScroll>
            </Gallery>
          </GroupBody>
          <Label w={68} size={12.5}>Chart Styles</Label>
        </Group>
        <Group $w={159}>
          <GroupBody>
            <CommandButton w={84} ml={11} icon={<SwitchIcon />} lines={[["Switch Row/", 82], ["Column", 51]]} />
            <CommandButton w={44} ml={6} icon={<SelectDataIcon />} lines={[["Select", 40], ["Data", 32]]} />
          </GroupBody>
          <Label w={27} size={12.5}>Data</Label>
        </Group>
        <Group $w={95}>
          <GroupBody>
            <CommandButton w={74} ml={10} icon={<ChartTypeIcon />} lines={[["Change", 50], ["Chart Type", 70]]} />
          </GroupBody>
          <Label w={27} size={12.5}>Type</Label>
        </Group>
        <Group $w={72}>
          <GroupBody>
            <CommandButton w={60} ml={5} icon={<MoveChartIcon />} lines={[["Move", 37], ["Chart", 35]]} />
          </GroupBody>
          <Label w={49} size={12.5}>Location</Label>
        </Group>
        <Gap $w={428} />
        <svg width="12" height="114" viewBox="0 0 12 114">
          <path d="M0.500 109L6 103.500L11.500 109" fill="none" stroke="#333" strokeWidth="1.600" />
        </svg>
      </Ribbon>

      <MessageBar>
        <Gap $w={11} />
        <svg width="28" height="28" viewBox="0 0 28 28">
          <circle cx="14" cy="14" r="13.200" fill="#fff" stroke="#4a9ac2" strokeWidth="1.500" />
          <path d="M14 11V21.500" stroke="#1f86c2" strokeWidth="3" />
          <circle cx="14" cy="7" r="1.800" fill="#1f86c2" />
        </svg>
        <Label w={143} size={14.8} $ml={11} $mt={1} $weight={500} $color="#3a3a3a">POSSIBLE DATA LOSS</Label>
        <Label w={988} size={14.8} $ml={12} $mt={1}>Some features might be lost if you save this workbook in the comma-delimited (.csv) format. To preserve these features, save it in an Excel file format.</Label>
        <MessageButton $w={157} $ml={25}><Label w={115} size={14.8}>Don't show again</Label></MessageButton>
        <MessageButton $w={102} $ml={11}><Label w={60} size={14.8}>Save As...</Label></MessageButton>
        <Gap $w={408} />
        <Cross size={9} color="#555" sw={2} />
      </MessageBar>

      <FormulaBar>
        <Field $w={127} $pl={7} $pr={7}>
          <Label w={53} size={14.800}>Chart 1</Label>
          <Arrow dir="down" size={8} />
        </Field>
        <Gap $w={17} />
        <Dots h={30} top={8} />
        <Field $w={137} $ml={17} $pl={15} $pr={15}>
          <Cross size={14} color="#bdbdbd" sw={1.800} />
          <svg width="18" height="13" viewBox="0 0 18 13"><path d="M1 7L6 12L17 1" fill="none" stroke="#bdbdbd" strokeWidth="2.200" /></svg>
          <svg width="17" height="20" viewBox="0 0 17 20" fill="none" stroke="#666" strokeLinecap="round">
            <path d="M11 1.500C8.500 0 7.500 3 7 5.500L5 15C4.500 18 3 19.500 1 18.500M4 7H9.500" strokeWidth="1.900" />
            <path d="M9 10.500C11 9.500 12 16 14.500 15.500M15.500 10L8.500 16" strokeWidth="1.500" />
          </svg>
        </Field>
        <Field $w={1604} $ml={3} $pl={1586} $pr={4}>
          <Chevron w={9} h={4.500} color="#666" sw={2} />
        </Field>
      </FormulaBar>

      <SheetArea>
        <Grid>
          <HeaderRow>
            <Corner><svg width="15" height="15" viewBox="0 0 15 15"><path d="M15 0V15H0Z" fill="#b4b4b4" /></svg></Corner>
            {columns.map((c) => <ColumnHeader key={c}>{c}</ColumnHeader>)}
          </HeaderRow>
          {yValues.map((y, r) => (
            <Row key={r}>
              <RowHeader>{r + 1}</RowHeader>
              <Cell $num={r > 0} $tint={r > 0 ? "a" : undefined}>{xValues[r]}</Cell>
              <Cell $num={r > 0} $tint={r > 0 ? "b" : "head"}>{y}</Cell>
              {columns.slice(2).map((c) => <Cell key={c} />)}
              <Cell $w={21} />
            </Row>
          ))}
          <RangeFrame $x={34} $y={47} $w={81} $h={700} $color="#7d5fa0" $edges="2px 2px 0 0" />
          <RangeFrame $x={112} $y={25} $w={83} $h={25} $color="#a83c48" $edges="0 2px 2px 2px" />
          <RangeFrame $x={193} $y={50} $w={2} $h={700} $color="#3f6a9c" $edges="0 2px 0 0" />
          <RangeHandle $x={34} $y={46} $w={2} $h={5} $color="#7d5fa0" />
          <RangeHandle $x={111} $y={46} $w={5} $h={5} $color="#7d5fa0" />
          <RangeHandle $x={191} $y={46} $w={5} $h={5} $color="#a83c48" />
          <RangeHandle $x={111} $y={25} $w={5} $h={2} $color="#a83c48" />
          <RangeHandle $x={191} $y={25} $w={5} $h={2} $color="#a83c48" />
          <ChartObject><Chart /></ChartObject>
        </Grid>
        <VScroll>
          <ScrollButton><Arrow dir="up" /></ScrollButton>
          <ScrollButton $h={21} />
          <ScrollButton $m="auto 0 0"><Arrow dir="down" /></ScrollButton>
        </VScroll>
      </SheetArea>

      <SheetTabs>
        <Gap $w={28} />
        <svg width="5" height="26" viewBox="0 0 5 26"><path d="M5 8V18L0 13Z" fill="#bdbdbd" /></svg>
        <Gap $w={24} />
        <svg width="5" height="26" viewBox="0 0 5 26"><path d="M0 8V18L5 13Z" fill="#bdbdbd" /></svg>
        <Gap $w={4} />
        <SheetTab><Label w={84} size={15.700} $weight={700} $color="#217346" $lh={21}>outputKey</Label></SheetTab>
        <Gap $w={33} />
        <svg width="20" height="28" viewBox="0 0 20 28" fill="none" stroke="#777">
          <circle cx="10" cy="14" r="9.300" strokeWidth="1.200" />
          <path d="M4.500 14H15.500M10 8.500V19.500" strokeWidth="1.800" />
        </svg>
        <Gap $w={885} />
        <Dots h={28} top={7} />
        <HScroll>
          <ScrollButton><Arrow dir="left" /></ScrollButton>
          <ScrollButton $w={661} $m="0 auto 0 -1px" />
          <ScrollButton><Arrow dir="right" /></ScrollButton>
        </HScroll>
      </SheetTabs>

      <StatusBar>
        <Label w={36} size={12.500} $ml={10} $mt={1}>Ready</Label>
        <Label w={128} size={12.500} $ml={1008} $mt={1}>Average: 173.3658277</Label>
        <Label w={76} size={12.500} $ml={20} $mt={1}>Count: 96870</Label>
        <Label w={88} size={12.500} $ml={20} $mt={1}>Sum: 16793601</Label>
        <Gap $w={25} />
        <svg width="19" height="17" viewBox="0 0 19 17" fill="none" stroke="#444">
          <path d="M18 6V1H1V11.500H8M3 15H8" strokeWidth="1.400" />
          <circle cx="13" cy="11.500" r="3.200" strokeWidth="2.200" />
          <circle cx="13" cy="11.500" r="4.800" strokeWidth="1.500" strokeDasharray="2 1.770" />
        </svg>
        <Label w={92} size={12.500} $ml={2} $mt={1}>Display Settings</Label>
        <Gap $w={24} />
        <ViewButton $on>
          <svg width="17" height="17" viewBox="0 0 17 17"><path d="M0.700 0.700H16.300V16.300H0.700ZM6 0.700V16.300M11 0.700V16.300M0.700 6H16.300M0.700 11H16.300" fill="none" stroke="#444" strokeWidth="1.300" /></svg>
        </ViewButton>
        <ViewButton>
          <svg width="17" height="16" viewBox="0 0 17 16"><path d="M0.700 0.700H16.300V15.300H0.700ZM4 3.500H13V13H4ZM6 6H11M6 8.200H11M6 10.500H11" fill="none" stroke="#444" strokeWidth="1.200" /></svg>
        </ViewButton>
        <Gap $w={17} />
        <svg width="17" height="16" viewBox="0 0 17 16"><path d="M0.700 0.700H16.300V15.300H0.700ZM0.700 8H16.300M8.500 0.700V15.300" fill="none" stroke="#444" strokeWidth="1.300" /></svg>
        <Gap $w={10} />
        <svg width="154" height="16" viewBox="0 0 154 16">
          <path d="M8 8H154" stroke="#888" strokeWidth="1" />
          <rect x="89" y="0" width="6" height="16" fill="#666" />
        </svg>
        <Gap $w={6} />
        <svg width="10" height="10" viewBox="0 0 10 10"><path d="M0 5H10M5 0V10" stroke="#444" strokeWidth="1.400" /></svg>
        <Label w={31} size={12.500} $ml={17} $mt={1}>100%</Label>
        <Tooltip><Label w={160} size={14.500} $lh={22}>Windows Ink Workspace</Label></Tooltip>
      </StatusBar>

      <Taskbar>
        <StartButton>
          <svg width="20" height="20" viewBox="0 0 20 20"><path d="M0 2.800L8.500 1.600V9.500H0ZM9.500 1.400L20 0V9.500H9.500ZM0 10.500H8.500V18.400L0 17.200ZM9.500 10.500H20V20L9.500 18.600Z" fill="#000" /></svg>
        </StartButton>
        <TaskSearch>
          <Magnifier size={20} color="#111" />
          <Label w={164} size={17.800} $ml={15} $mt={1} $lh={24}>Type here to search</Label>
        </TaskSearch>
        {taskItems.map((t) => (
          <TaskItem key={t.icon} $ml={t.ml} $running={t.running} $stacked={t.stacked} $focus={t.focus}>{taskIcons[t.icon]}</TaskItem>
        ))}
        <Tray>
          <TrayItem $w={40}><Chevron w={15} h={8} up color="#111" sw={1.500} /></TrayItem>
          <TrayItem $w={20}>
            <svg width="20" height="14" viewBox="0 0 20 14">
              <path d="M4.500 13.200A4 4 0 0 1 4 5.500A6 6 0 0 1 14.500 3.800A4.800 4.800 0 0 1 15.500 13.200Z" fill="#e2e0e0" stroke="#222" strokeWidth="1.300" />
              <path d="M4 6C5 2 12 0 15 4.500L8 8Z" fill="#666" opacity="0.750" />
            </svg>
          </TrayItem>
          <TrayItem $w={40}>
            <svg width="20" height="14" viewBox="0 0 20 14" fill="none" stroke="#111" strokeWidth="1.300">
              <path d="M6 3H17.500V13H4V9M18.500 6V10" /><rect x="7" y="5" width="8" height="6" fill="#111" stroke="none" />
              <path d="M2 0V3M5 0V3M0.700 3H6V5.500H0.700ZM3.300 6V9" />
            </svg>
          </TrayItem>
          <TrayItem $w={22}>
            <svg width="17" height="16" viewBox="0 0 17 16" fill="none" stroke="#222" strokeWidth="1.300">
              <path d="M1 15A14 14 0 0 1 16 1M4.500 15A10.500 10.500 0 0 1 16 5M8.500 15A7 7 0 0 1 16 9" /><circle cx="13.500" cy="13.500" r="1.700" fill="#222" />
            </svg>
          </TrayItem>
          <TrayItem $w={33}>
            <svg width="20" height="16" viewBox="0 0 20 16" fill="none" stroke="#111" strokeWidth="1.200">
              <path d="M0.700 5.500H3.500L7.500 1.500V14.500L3.500 10.500H0.700Z" /><path d="M10.500 5.500Q12 8 10.500 10.500" />
              <path d="M13.500 3.500Q16 8 13.500 12.500M16.500 1.500Q20.500 8 16.500 14.500" stroke="#aaa" />
            </svg>
          </TrayItem>
          <TrayItem $w={40} $hover>
            <svg width="21" height="20" viewBox="0 0 21 20" fill="none" stroke="#111" strokeWidth="1.500">
              <path d="M7 13L13 1.500Q15 0 16 2L10.500 13L7 16ZM7.500 9.500C2 9.500 0 13 2 17C4 20 8 18 9 15M14 6H18Q20 7.500 18.500 9L14 11.500" />
            </svg>
          </TrayItem>
          <Clock>
            <Label w={53} size={14.800} $lh={23}>8:22 AM</Label>
            <Label w={75} size={14.800} $lh={23}>10/12/2020</Label>
          </Clock>
          <TrayItem $w={60}>
            <svg width="32" height="32" viewBox="0 0 32 32">
              <path d="M2 6H22V22H12L7 26V22H2Z" fill="#000" />
              <path d="M5.500 10.500H18.500M5.500 14H18.500M5.500 17.500H14" stroke="#f0e4dc" strokeWidth="1.300" />
              <circle cx="21" cy="25" r="10" fill="#d9d5d2" stroke="#888" strokeWidth="1" />
              <text x="21" y="30.500" fontSize="15.500" textAnchor="middle" fill="#111" fontFamily='"Open Sans", sans-serif'>1</text>
            </svg>
          </TrayItem>
          <svg width="1" height="50" viewBox="0 0 1 50"><path d="M0.500 0V50" stroke="#c9bcb3" /></svg>
        </Tray>
      </Taskbar>
    </Window>
  );
}
